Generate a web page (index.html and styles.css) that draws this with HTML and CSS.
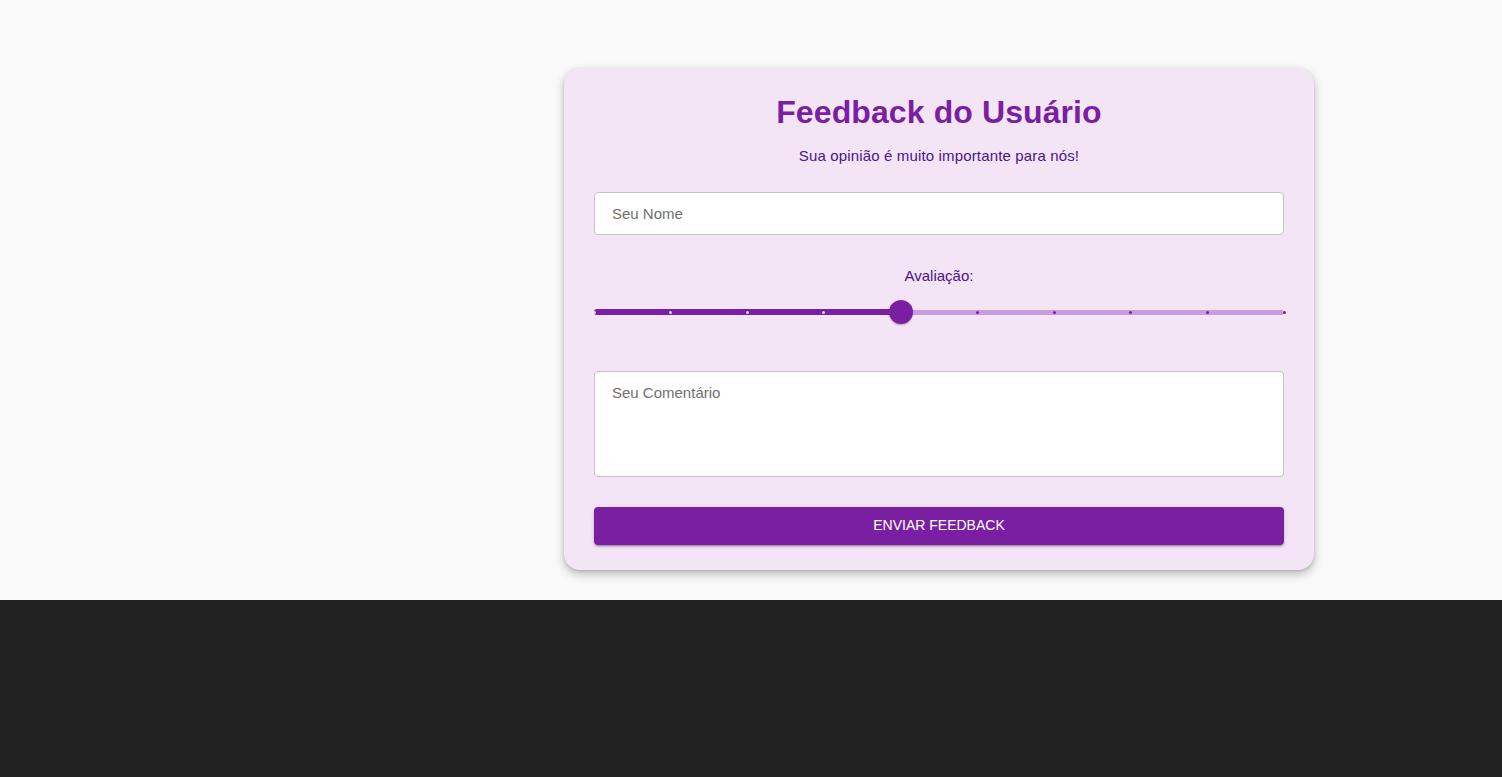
FILE: index.html
```html
<!DOCTYPE html>
<html lang="pt-BR">
<head>
<meta charset="utf-8">
<title>Feedback do Usuário</title>
<link rel="stylesheet" href="styles.css">
</head>
<body>
<main class="top">
  <form class="card">
    <h1 class="title">Feedback do Usuário</h1>
    <p class="subtitle">Sua opinião é muito importante para nós!</p>
    <input class="field" type="text" placeholder="Seu Nome">
    <p class="label">Avaliação:</p>
    <div class="slider">
      <span class="rail"></span>
      <span class="track" style="width:44.444%"></span>
      <span class="mark on" style="left:0%"></span>
      <span class="mark on" style="left:11.111%"></span>
      <span class="mark on" style="left:22.222%"></span>
      <span class="mark on" style="left:33.333%"></span>
      <span class="mark on" style="left:44.444%"></span>
      <span class="mark" style="left:55.556%"></span>
      <span class="mark" style="left:66.667%"></span>
      <span class="mark" style="left:77.778%"></span>
      <span class="mark" style="left:88.889%"></span>
      <span class="mark" style="left:100%"></span>
      <span class="thumb" style="left:44.444%"></span>
    </div>
    <textarea class="field area" placeholder="Seu Comentário"></textarea>
    <button class="btn" type="button">Enviar Feedback</button>
  </form>
</main>
<footer class="bottom"></footer>
</body>
</html>
```
FILE: styles.css
```css
* { box-sizing: border-box; }
html, body { margin: 0; padding: 0; }
body {
  font-family: "Liberation Sans", Arial, sans-serif;
  background: #222222;
  min-height: 777px;
}
.top {
  background: #f9f9f9;
  height: 600px;
  padding-top: 68px;
  display: flex;
}
.card {
  margin-left: 564px;
  width: 750px;
  height: 502px;
  background: #f3e5f5;
  border-radius: 16px;
  box-shadow: 0 4px 10px rgba(0,0,0,0.25), 0 1px 3px rgba(0,0,0,0.12);
  padding: 26px 30px 25px;
  display: flex;
  flex-direction: column;
}
.title {
  margin: 0;
  font-size: 32px;
  line-height: 37px;
  font-weight: 700;
  color: #7b1fa2;
  text-align: center;
  letter-spacing: 0.1px;
}
.subtitle {
  margin: 16px 0 0;
  font-size: 15px;
  line-height: 17px;
  color: #4a148c;
  text-align: center;
  letter-spacing: 0.15px;
}
.field {
  display: block;
  width: 100%;
  margin-top: 28px;
  height: 43px;
  border: 1px solid #c4c4c4;
  border-radius: 4px;
  background: #ffffff;
  padding: 0 17px;
  font-family: "Liberation Sans", Arial, sans-serif;
  font-size: 15px;
  color: #222;
  outline: none;
}
.field::placeholder { color: #6f6f6f; opacity: 1; }
.label {
  margin: 32px 0 0;
  font-size: 15px;
  line-height: 17px;
  color: #4a148c;
  text-align: center;
}
.slider {
  position: relative;
  margin-top: 16px;
  height: 24px;
  width: 100%;
}
.rail {
  position: absolute;
  left: 0;
  right: 0;
  top: 9.5px;
  height: 5px;
  border-radius: 3px;
  background: #c99cdb;
}
.track {
  position: absolute;
  left: 0;
  top: 9px;
  height: 6px;
  border-radius: 3px;
  background: #7b1fa2;
}
.mark {
  position: absolute;
  top: 10.5px;
  width: 3px;
  height: 3px;
  margin-left: -1.5px;
  border-radius: 50%;
  background: #7b1fa2;
}
.mark.on { background: rgba(243,229,245,0.9); }
.thumb {
  position: absolute;
  top: 0;
  width: 24px;
  height: 24px;
  margin-left: -12px;
  border-radius: 50%;
  background: #7b1fa2;
  box-shadow: 0 2px 2px -1px rgba(0,0,0,0.2), 0 1px 2px rgba(0,0,0,0.14);
}
.area {
  margin-top: 47px;
  height: 106px;
  padding: 12px 17px;
  resize: none;
  line-height: 17px;
}
.btn {
  margin-top: 30px;
  height: 38px;
  width: 100%;
  border: 0;
  border-radius: 4px;
  background: #7b1fa2;
  color: #ffffff;
  font-family: "Liberation Sans", Arial, sans-serif;
  font-size: 14px;
  font-weight: 400;
  text-transform: uppercase;
  padding: 0 0 3px;
  box-shadow: 0 3px 1px -2px rgba(0,0,0,0.2), 0 2px 2px 0 rgba(0,0,0,0.14), 0 1px 5px 0 rgba(0,0,0,0.12);
  cursor: pointer;
}
.bottom {
  height: 177px;
  background: #222222;
}
```
